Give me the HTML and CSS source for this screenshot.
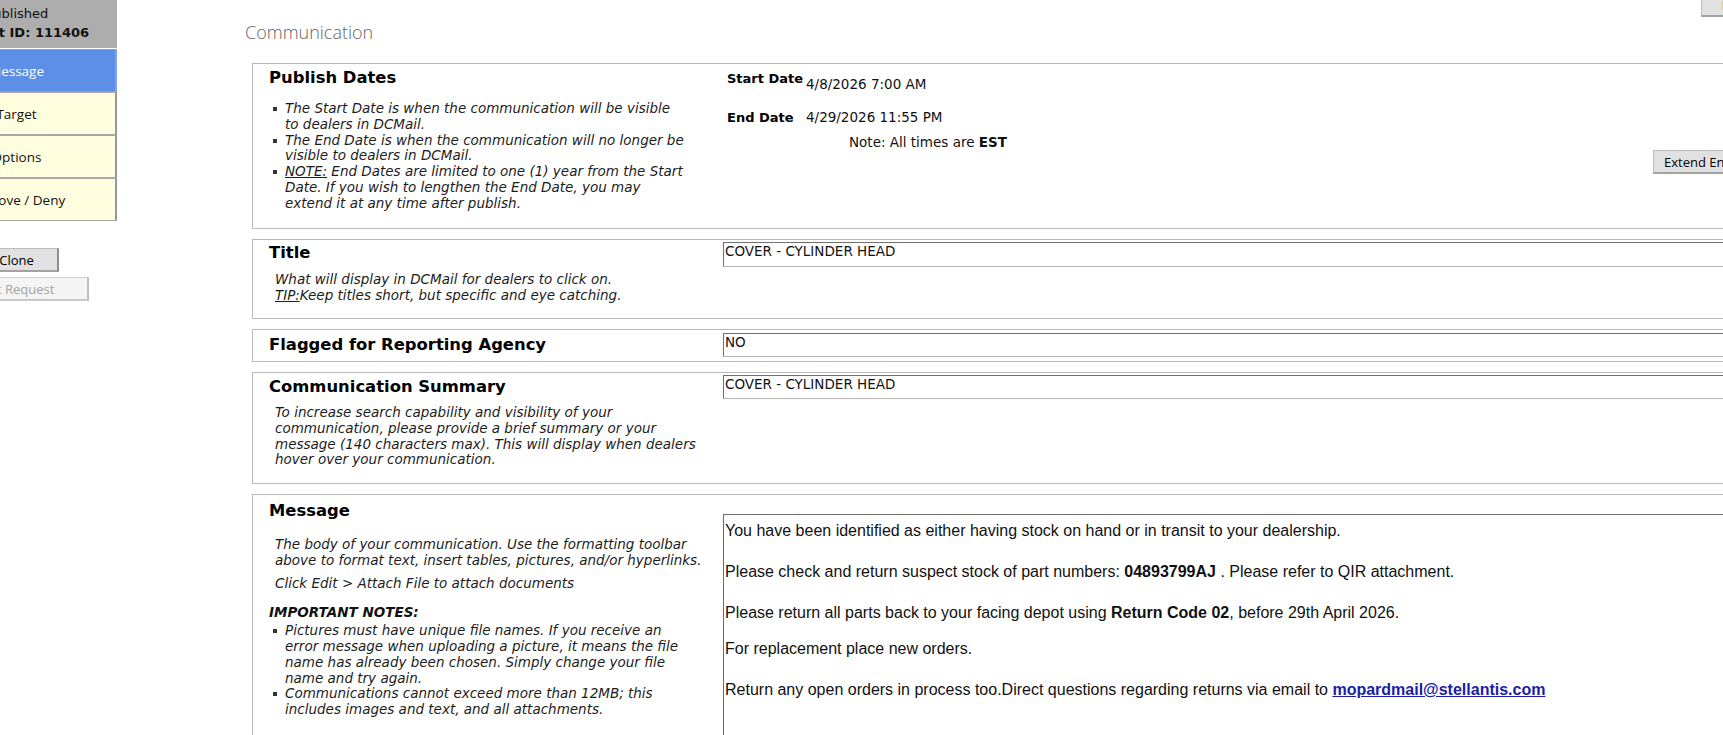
FILE: index.html
```html
<!DOCTYPE html>
<html lang="en">
<head>
<meta charset="utf-8">
<title>Communication</title>
<link rel="stylesheet" href="styles.css">
</head>
<body>
<div class="page">
  <aside class="nav">
    <div class="nav-head">
      <div>Published</div>
      <div class="nav-id">Request ID: 111406</div>
    </div>
    <div class="nav-item nav-item-active">Message</div>
    <div class="nav-item">Target</div>
    <div class="nav-item">Options</div>
    <div class="nav-item">Approve / Deny</div>
    <div class="nav-actions">
      <button class="btn btn-clone" type="button">Clone</button>
      <button class="btn btn-request" type="button" disabled>Edit Request</button>
    </div>
  </aside>

  <main class="main">
    <div class="main-head">
      <h1 class="page-title">Communication</h1>
      <button class="btn btn-top" type="button">Preview</button>
    </div>

    <section class="panel panel-dates">
      <div class="panel-info">
        <h2>Publish Dates</h2>
        <ul class="notes notes-dates">
          <li>The Start Date is when the communication will be visible<br>to dealers in DCMail.</li>
          <li>The End Date is when the communication will no longer be<br>visible to dealers in DCMail.</li>
          <li><u>NOTE:</u> End Dates are limited to one (1) year from the Start<br>Date. If you wish to lengthen the End Date, you may<br>extend it at any time after publish.</li>
        </ul>
      </div>
      <div class="panel-field">
        <div class="dates">
          <div class="date-row date-row-start">
            <div class="date-label">Start Date</div>
            <div class="date-value">4/8/2026 7:00 AM</div>
          </div>
          <div class="date-row date-row-end">
            <div class="date-label">End Date</div>
            <div class="date-value">4/29/2026 11:55 PM</div>
          </div>
          <div class="date-note">Note: All times are <b>EST</b></div>
          <button class="btn btn-extend" type="button">Extend End Date</button>
        </div>
      </div>
    </section>

    <section class="panel panel-title">
      <div class="panel-info">
        <h2>Title</h2>
        <p class="desc">What will display in DCMail for dealers to click on.<br><u>TIP:</u>Keep titles short, but specific and eye catching.</p>
      </div>
      <div class="panel-field">
        <div class="field">COVER - CYLINDER HEAD</div>
      </div>
    </section>

    <section class="panel panel-flag">
      <div class="panel-info">
        <h2>Flagged for Reporting Agency</h2>
      </div>
      <div class="panel-field">
        <div class="field field-short">NO</div>
      </div>
    </section>

    <section class="panel panel-summary">
      <div class="panel-info">
        <h2>Communication Summary</h2>
        <p class="desc desc-summary">To increase search capability and visibility of your<br>communication, please provide a brief summary or your<br>message (140 characters max). This will display when dealers<br>hover over your communication.</p>
      </div>
      <div class="panel-field">
        <div class="field field-short">COVER - CYLINDER HEAD</div>
      </div>
    </section>

    <section class="panel panel-message">
      <div class="panel-info">
        <h2>Message</h2>
        <p class="desc desc-message">The body of your communication. Use the formatting toolbar<br>above to format text, insert tables, pictures, and/or hyperlinks.</p>
        <p class="desc desc-attach">Click Edit &gt; Attach File to attach documents</p>
        <div class="notes-title">IMPORTANT NOTES:</div>
        <ul class="notes notes-message">
          <li>Pictures must have unique file names. If you receive an<br>error message when uploading a picture, it means the file<br>name has already been chosen. Simply change your file<br>name and try again.</li>
          <li>Communications cannot exceed more than 12MB; this<br>includes images and text, and all attachments.</li>
        </ul>
      </div>
      <div class="panel-field">
        <div class="editor">
          <p>You have been identified as either having stock on hand or in transit to your dealership.</p>
          <p>Please check and return suspect stock of part numbers: <b>04893799AJ</b> . Please refer to QIR attachment.</p>
          <p class="editor-tight">Please return all parts back to your facing depot using <b>Return Code 02</b>, before 29th April 2026.</p>
          <p>For replacement place new orders.</p>
          <p>Return any open orders in process too.Direct questions regarding returns via email to <a class="mail" href="#">mopardmail@stellantis.com</a></p>
        </div>
      </div>
    </section>
  </main>
</div>
</body>
</html>
```

FILE: styles.css
```css
html, body {
  margin: 0;
  padding: 0;
  width: 1723px;
  height: 735px;
  overflow: hidden;
  background: #ffffff;
}

body {
  font-family: "DejaVu Sans", Verdana, sans-serif;
  color: #000;
}

.page {
  display: flex;
  align-items: flex-start;
  width: max-content;
}

/* ---------- left navigation ---------- */
.nav {
  flex: none;
  width: 200px;
  margin-left: -83px;
}

.nav-head {
  box-sizing: border-box;
  height: 48px;
  padding-top: 4px;
  background: #adadad;
  text-align: center;
  font: 13px/19px "DejaVu Sans", Verdana, sans-serif;
  color: #111;
  margin-bottom: 1px;
}

.nav-id {
  font-weight: bold;
}

.nav-item {
  box-sizing: border-box;
  height: 43px;
  display: flex;
  align-items: center;
  justify-content: center;
  background: #ffffe0;
  border: 1px solid #a8a8a8;
  border-right: 2px solid #979797;
  font: 13.5px "Open Sans", sans-serif;
  color: #111;
}

.nav-item-active {
  background: #5d8fe6;
  border-color: #7ea5ea;
  color: #ffffff;
}

.nav-actions {
  display: flex;
  flex-direction: column;
  align-items: center;
  padding-top: 27px;
  gap: 5px;
}

.btn {
  box-sizing: border-box;
  height: 24px;
  padding: 0 10px;
  font: 13px "Open Sans", sans-serif;
  color: #000;
  background: #e1e1e1;
  border: 1px solid #bcbcbc;
  border-right: 2px solid #8e8e8e;
  border-bottom: 2px solid #a2a2a2;
  text-align: center;
}

.btn-clone {
  width: 84px;
}

.btn-request {
  width: 144px;
  background: #f4f4f4;
  border-color: #d2d2d2;
  border-right-color: #bdbdbd;
  border-bottom-color: #c8c8c8;
  color: #a3a3a3;
}

/* ---------- main ---------- */
.main {
  flex: none;
  width: 1600px;
  padding-left: 135px;
}

.main-head {
  display: grid;
  grid-template-columns: 1449px 90px;
  align-items: start;
  margin-bottom: 19px;
}

.page-title {
  margin: 20px 0 0 -7px;
  font: 300 18px/24px "Open Sans", sans-serif;
  color: #666;
}

.btn-top {
  margin-top: -7px;
  width: 90px;
}

.panel {
  box-sizing: border-box;
  display: flex;
  width: 1530px;
  border: 1px solid #bababa;
  margin-bottom: 10px;
}

.panel-dates { height: 166px; }
.panel-title { height: 80px; }
.panel-flag { height: 33px; }
.panel-summary { height: 112px; }
.panel-message { height: 300px; }

.panel-info {
  box-sizing: border-box;
  flex: none;
  width: 470px;
  padding: 4px 16px 0;
}

.panel-title .panel-info { padding-top: 3px; }
.panel-flag .panel-info { padding-top: 5px; }
.panel-message .panel-info { padding-top: 6px; }

.panel-field {
  flex: 1;
  min-width: 0;
}

h2 {
  margin: 0;
  font: bold 16.4px/19px "DejaVu Sans", Verdana, sans-serif;
  color: #000;
  white-space: nowrap;
}

.desc {
  margin: 10px 0 0 6px;
  font: italic 13.5px/15.8px "DejaVu Sans", Verdana, sans-serif;
  color: #1c1c1c;
  white-space: nowrap;
}

.desc-summary { margin-top: 9px; }
.desc-message { margin-top: 17px; }
.desc-attach { margin-top: 7px; }

.notes-title {
  margin-top: 14px;
  font: italic bold 13.5px/15.8px "DejaVu Sans", Verdana, sans-serif;
  color: #111;
}

.notes {
  list-style: none;
  margin: 14px 0 0;
  padding-left: 16px;
  font: italic 13.5px/15.8px "DejaVu Sans", Verdana, sans-serif;
  color: #1c1c1c;
  white-space: nowrap;
}

.notes-message { margin-top: 2px; }

.notes li::before {
  content: "";
  display: inline-block;
  width: 4px;
  height: 4px;
  background: #333;
  margin-left: -12px;
  margin-right: 8px;
  vertical-align: middle;
}

/* ---------- dates ---------- */
.dates {
  padding: 7px 0 0 4px;
  font: 13.5px/15.8px "DejaVu Sans", Verdana, sans-serif;
  color: #111;
}

.date-row {
  display: flex;
  align-items: flex-start;
}

.date-label {
  flex: none;
  width: 79px;
  font-size: 13px;
  font-weight: bold;
  white-space: nowrap;
  color: #000;
}

.date-value {
  white-space: nowrap;
}

.date-row-start .date-value { padding-top: 6px; }
.date-row-end { margin-top: 17px; }

.date-note {
  margin: 9px 0 0 122px;
}

.btn-extend {
  display: block;
  margin-left: 926px;
  width: 130px;
  text-align: left;
}

/* ---------- fields ---------- */
.field {
  box-sizing: border-box;
  height: 25px;
  padding: 1px;
  border: 1px solid;
  border-color: #707070 #b4b4b4 #b4b4b4 #707070;
  font: 13.5px/15.8px "DejaVu Sans", Verdana, sans-serif;
  color: #111;
}

.field-short { height: 24px; }

.panel-title .panel-field { padding-top: 2px; }
.panel-flag .panel-field { padding-top: 3px; }
.panel-summary .panel-field { padding-top: 2px; }

.editor {
  box-sizing: border-box;
  margin-top: 19px;
  height: 320px;
  padding: 7px 0 0 1px;
  border-top: 1px solid #6a6a6a;
  border-left: 1px solid #6a6a6a;
  font: 16px/18.4px "Liberation Sans", Arial, sans-serif;
  color: #111;
}

.editor p {
  margin: 0 0 22.4px;
  white-space: nowrap;
}

.editor p.editor-tight {
  margin-bottom: 18.4px;
}

.mail {
  color: #1c1ca6;
  font-weight: bold;
  text-decoration: underline;
}
```
